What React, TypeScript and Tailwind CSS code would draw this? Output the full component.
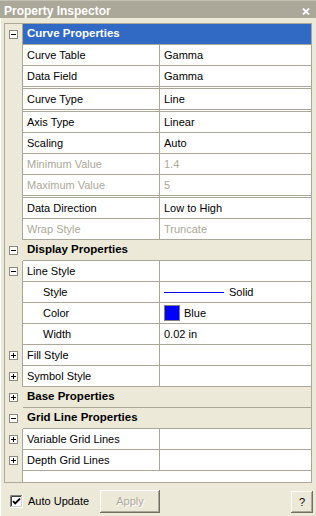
import React from 'react'

type Row = {
  label: string
  value?: React.ReactNode
  kind?: 'cat' | 'prop'
  toggle?: '+' | '-'
  selected?: boolean
  disabled?: boolean
  indent?: boolean
  double?: boolean
}

const rows: Row[] = [
  { label: 'Curve Properties', kind: 'cat', toggle: '-', selected: true },
  { label: 'Curve Table', value: 'Gamma' },
  { label: 'Data Field', value: 'Gamma', double: true },
  { label: 'Curve Type', value: 'Line', double: true },
  { label: 'Axis Type', value: 'Linear' },
  { label: 'Scaling', value: 'Auto' },
  { label: 'Minimum Value', value: '1.4', disabled: true },
  { label: 'Maximum Value', value: '5', disabled: true, double: true },
  { label: 'Data Direction', value: 'Low to High' },
  { label: 'Wrap Style', value: 'Truncate', disabled: true },
  { label: 'Display Properties', kind: 'cat', toggle: '-' },
  { label: 'Line Style', toggle: '-' },
  {
    label: 'Style',
    indent: true,
    value: (
      <>
        <span className="block w-[60px] h-px bg-[#0000ff]" />
        <span className="ml-[5px]">Solid</span>
      </>
    ),
  },
  {
    label: 'Color',
    indent: true,
    value: (
      <>
        <span className="block w-[16px] h-[16px] border border-[#808080] bg-[#0000ff]" />
        <span className="ml-[4px]">Blue</span>
      </>
    ),
  },
  { label: 'Width', indent: true, value: '0.02 in' },
  { label: 'Fill Style', toggle: '+' },
  { label: 'Symbol Style', toggle: '+' },
  { label: 'Base Properties', kind: 'cat', toggle: '+' },
  { label: 'Grid Line Properties', kind: 'cat', toggle: '-' },
  { label: 'Variable Grid Lines', toggle: '+' },
  { label: 'Depth Grid Lines', toggle: '+' },
]

function ToggleBox({ sign }: { sign: '+' | '-' }) {
  return (
    <svg width="9" height="9" viewBox="0 0 9 9">
      <rect x="0.5" y="0.5" width="8" height="8" fill="#fbfaf6" stroke="#8c8a80" />
      <path d="M2 4.5h5" stroke="#000" />
      {sign === '+' && <path d="M4.5 2v5" stroke="#000" />}
    </svg>
  )
}

function GridRow({ row }: { row: Row }) {
  const toggle = (
    <div className="w-[17px] shrink-0 flex items-center justify-center">
      {row.toggle ? <ToggleBox sign={row.toggle} /> : null}
    </div>
  )

  if (row.kind === 'cat') {
    return (
      <div className="flex h-[21px]">
        {toggle}
        <div className={row.selected ? 'w-px bg-[#aca899]' : 'w-px'} />
        <div
          className={
            row.selected
              ? 'flex-1 flex items-center pl-[4px] font-bold text-[11.5px] border-b border-[#aca899] bg-[#316ac5] text-white'
              : 'flex-1 flex items-center pl-[4px] font-bold text-[11.5px] border-b border-[#aca899] text-black'
          }
        >
          {row.label}
        </div>
      </div>
    )
  }

  // double rows get a 1-1-1 double rule under them
  const line = row.double
    ? 'border-b-[3px] border-double border-[#aca899]'
    : 'border-b border-[#aca899]'
  const tone = row.disabled ? 'text-[#aca899]' : 'text-black'

  return (
    <div className={row.double ? 'flex h-[23px]' : 'flex h-[21px]'}>
      {toggle}
      <div className="w-px bg-[#aca899]" />
      <div
        className={`w-[136px] shrink-0 bg-white flex items-center whitespace-nowrap ${line} ${tone} ${
          row.indent ? 'pl-[20px]' : 'pl-[4px]'
        }`}
      >
        {row.label}
      </div>
      <div className="w-px bg-[#aca899]" />
      <div className={`flex-1 bg-white flex items-center pl-[4px] whitespace-nowrap ${line} ${tone}`}>
        {row.value}
      </div>
    </div>
  )
}

export default function App() {
  return (
    <div className="w-[316px] h-[516px] bg-[#ece9d8] flex flex-col font-['Liberation_Sans',Arial,sans-serif] text-[11px] text-black select-none">
      {/* Title bar */}
      <div className="h-[18px] shrink-0 bg-[#aca899] border-t border-[#c4c1b3] flex items-center justify-between pl-[4px] pr-[6px] pt-[3px]">
        <span className="text-white font-bold text-[12px] leading-none">Property Inspector</span>
        <svg width="8" height="7" viewBox="0 0 8 7">
          <path d="M1 0.5l6 6M7 0.5l-6 6" stroke="#fff" strokeWidth="1.8" />
        </svg>
      </div>

      <div className="flex-1 flex flex-col border-l border-white">
        {/* Grid */}
        <div className="mt-[5px] ml-[3px] w-[308px] border border-[#aca899] flex flex-col">
          {rows.map((row, i) => (
            <GridRow key={i} row={row} />
          ))}
          <div className="flex h-[11px]">
            <div className="w-[17px]" />
            <div className="w-px bg-[#aca899]" />
            <div className="flex-1 bg-white" />
          </div>
        </div>

        {/* Bottom bar */}
        <div className="flex items-start mt-[7px] pl-[9px] pr-[3px]">
          <div className="w-[90px] flex items-center mt-[5px]">
            <svg width="13" height="13" viewBox="0 0 13 13">
              <rect x="0" y="0" width="13" height="13" fill="#fff" />
              <path d="M0.5 12V0.5H12" stroke="#808080" fill="none" />
              <path d="M1.5 11V1.5H11" stroke="#404040" fill="none" />
              <path d="M1 11.5H11.5V1" stroke="#d4d0c8" fill="none" />
              <path d="M3 6.2L5.2 8.4L10 3.6" stroke="#000" strokeWidth="1.9" fill="none" />
            </svg>
            <span className="ml-[5px] leading-none">Auto Update</span>
          </div>
          <div className="w-[60px] h-[23px] flex items-center justify-center bg-[#ece9d8] text-[#aca899] [text-shadow:1px_1px_0_#fff] shadow-[inset_-1px_-1px_0_#716f64,inset_1px_1px_0_#fff,inset_-2px_-2px_0_#aca899]">
            Apply
          </div>
          <div className="flex-1" />
          <div className="w-[22px] h-[22px] mt-px flex items-center justify-center bg-[#ece9d8] shadow-[inset_-1px_-1px_0_#716f64,inset_1px_1px_0_#fff,inset_-2px_-2px_0_#aca899]">
            ?
          </div>
        </div>
      </div>
    </div>
  )
}
